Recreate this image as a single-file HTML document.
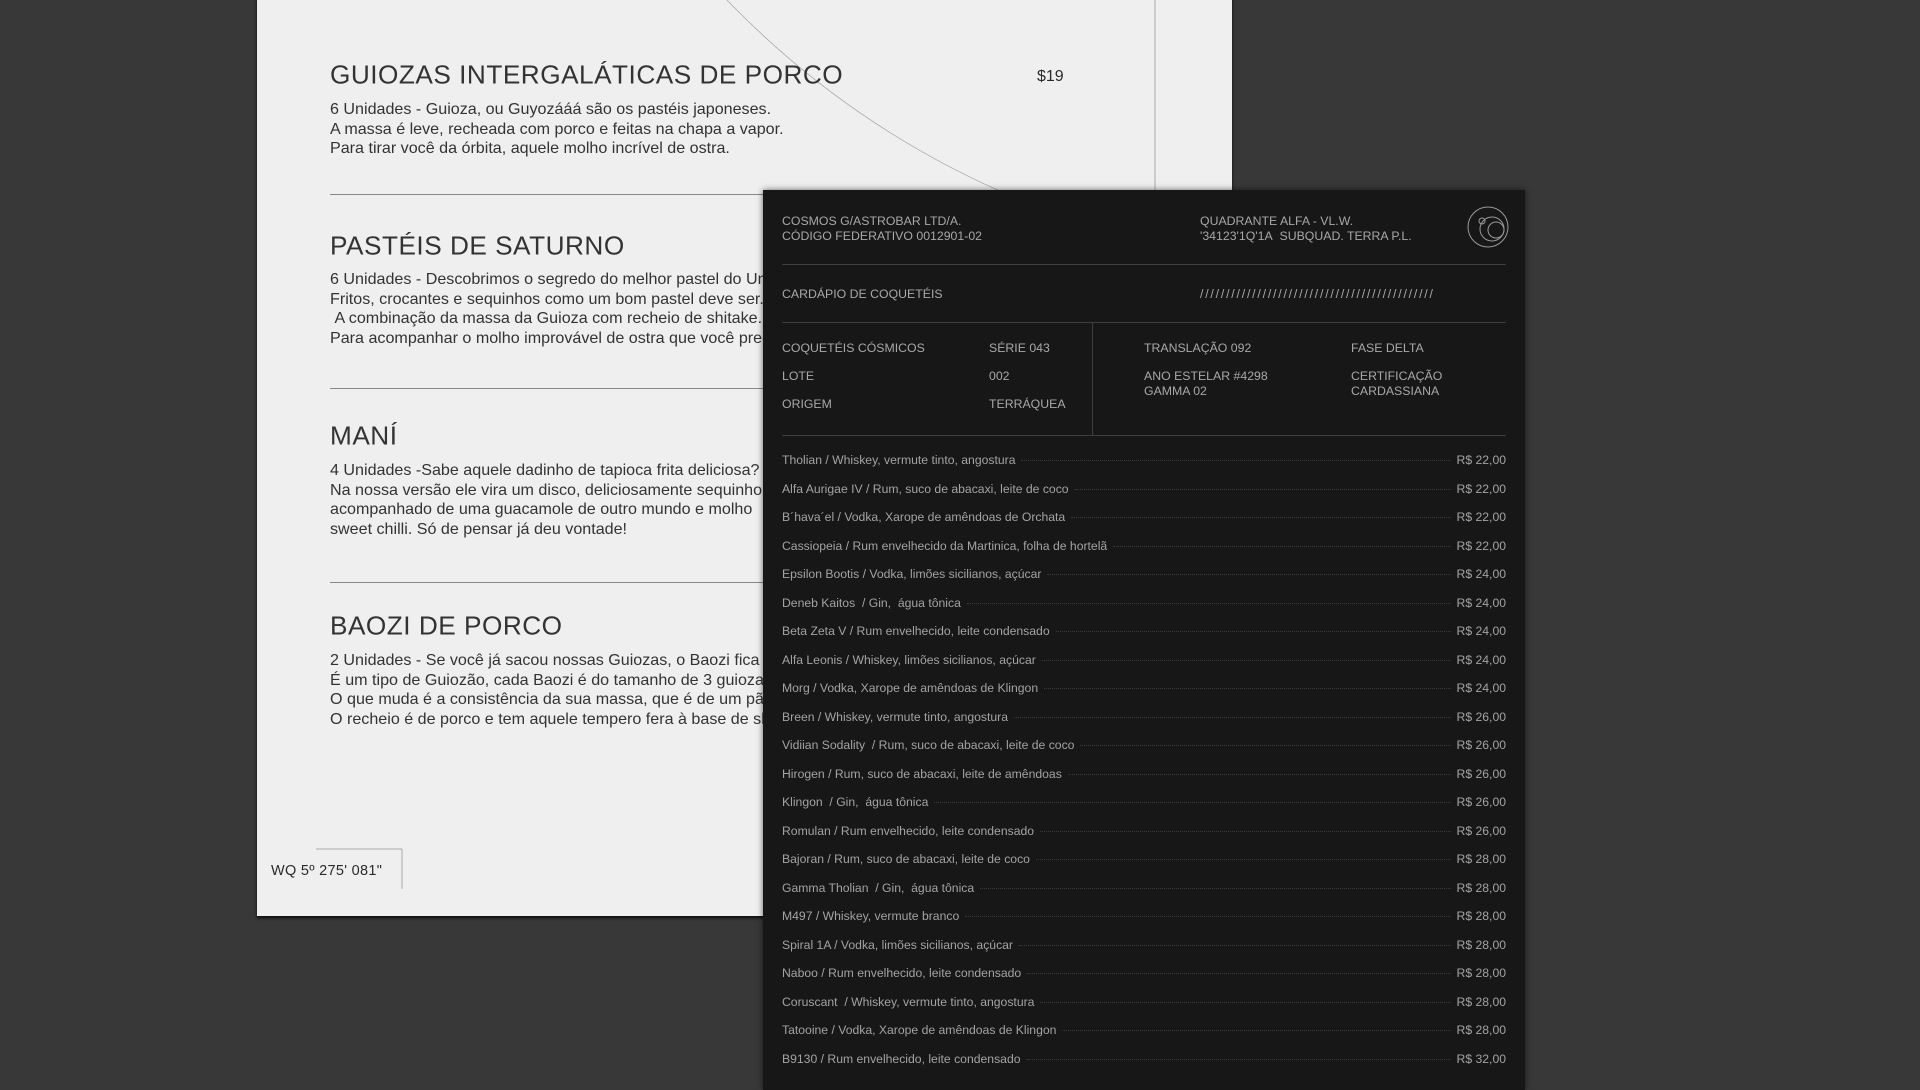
<!DOCTYPE html>
<html><head><meta charset="utf-8"><style>
*{margin:0;padding:0;box-sizing:border-box}
body{width:1920px;height:1080px;overflow:hidden;background:#383838;position:relative;font-family:"Liberation Sans Narrow","Liberation Sans",sans-serif}
.paper{position:absolute;left:257px;top:-10px;width:975px;height:926px;background:#efefef;box-shadow:0 2px 3px rgba(0,0,0,.8);overflow:hidden}
.a{position:absolute;white-space:nowrap;color:#2a2a2a}
.h{font-size:26.2px;letter-spacing:0.5px;color:#333;transform:translateY(-50%)}
.b{font-size:16.1px;line-height:19.7px;color:#333}
.hr{position:absolute;height:1px;background:#888}
.card{position:absolute;left:763px;top:190px;width:762px;height:900px;background:#171717;box-shadow:0 0 6px rgba(0,0,0,.6)}
.d{position:absolute;white-space:nowrap;color:#a8a8a8;font-size:12.3px;line-height:15px}
.dl{position:absolute;height:1px;background:#3e3e3e}
.row{position:absolute;left:19px;width:724px;display:flex;align-items:baseline;font-size:12.2px;color:#a3a3a3}
.row .dots{flex:1;border-bottom:1px dotted #3a3a3a;margin:0 6px;transform:translateY(-3px)}
</style></head><body>
<div class="paper">
<svg style="position:absolute;left:0;top:0" width="975" height="926"><circle cx="1093" cy="-590" r="865" fill="none" stroke="#aaa" stroke-width="0.8"/><line x1="898" y1="0" x2="898" y2="210" stroke="#aaa" stroke-width="1"/><line x1="59" y1="859" x2="145" y2="859" stroke="#aaa"/><line x1="145" y1="859" x2="145" y2="899" stroke="#aaa"/></svg>
<div class="a h" style="left:73px;top:85px">GUIOZAS INTERGALÁTICAS DE PORCO</div>
<div class="a" style="left:780px;top:78px;font-size:16px">$19</div>
<div class="a b" style="left:73px;top:110px">6 Unidades - Guioza, ou Guyozááá são os pastéis japoneses.<br>A massa é leve, recheada com porco e feitas na chapa a vapor.<br>Para tirar você da órbita, aquele molho incrível de ostra.</div>
<div class="hr" style="left:73px;top:204px;width:700px"></div>
<div class="a h" style="left:73px;top:256px">PASTÉIS DE SATURNO</div>
<div class="a b" style="left:73px;top:280px">6 Unidades - Descobrimos o segredo do melhor pastel do Universo.<br>Fritos, crocantes e sequinhos como um bom pastel deve ser.<br>&nbsp;A combinação da massa da Guioza com recheio de shitake.<br>Para acompanhar o molho improvável de ostra que você precisa provar.</div>
<div class="hr" style="left:73px;top:398px;width:700px"></div>
<div class="a h" style="left:73px;top:446px">MANÍ</div>
<div class="a b" style="left:73px;top:471px">4 Unidades -Sabe aquele dadinho de tapioca frita deliciosa?<br>Na nossa versão ele vira um disco, deliciosamente sequinho,<br>acompanhado de uma guacamole de outro mundo e molho<br>sweet chilli. Só de pensar já deu vontade!</div>
<div class="hr" style="left:73px;top:592px;width:700px"></div>
<div class="a h" style="left:73px;top:636px">BAOZI DE PORCO</div>
<div class="a b" style="left:73px;top:661px">2 Unidades - Se você já sacou nossas Guiozas, o Baozi fica fácil.<br>É um tipo de Guiozão, cada Baozi é do tamanho de 3 guiozas.<br>O que muda é a consistência da sua massa, que é de um pão.<br>O recheio é de porco e tem aquele tempero fera à base de shoyu.</div>
<div class="a" style="left:14px;top:873px;font-size:14.5px;letter-spacing:.3px">WQ 5º 275' 081"</div>
</div>
<div class="card">
<div class="d" style="left:19px;top:24px">COSMOS G/ASTROBAR LTD/A.<br>CÓDIGO FEDERATIVO 0012901-02</div>
<div class="d" style="left:437px;top:24px">QUADRANTE ALFA - VL.W.<br>'34123'1Q'1A&nbsp; SUBQUAD. TERRA P.L.</div>
<svg style="position:absolute;left:703px;top:15px" width="44" height="44" fill="none" stroke="#999" stroke-width="1"><circle cx="22" cy="22" r="20"/><circle cx="26" cy="24" r="12"/><circle cx="30" cy="25" r="8"/><circle cx="16" cy="16" r="3"/></svg>
<div class="dl" style="left:19px;top:74px;width:724px"></div>
<div class="d" style="left:19px;top:97px">CARDÁPIO DE COQUETÉIS</div>
<div class="d" style="left:437px;top:97px;letter-spacing:1.8px">/////////////////////////////////////////////</div>
<div class="dl" style="left:19px;top:132px;width:724px"></div>
<div style="position:absolute;left:329px;top:132px;width:1px;height:113px;background:#3e3e3e"></div>
<div class="d" style="left:19px;top:151px">COQUETÉIS CÓSMICOS</div>
<div class="d" style="left:226px;top:151px">SÉRIE 043</div>
<div class="d" style="left:381px;top:151px">TRANSLAÇÃO 092</div>
<div class="d" style="left:588px;top:151px">FASE DELTA</div>
<div class="d" style="left:19px;top:179px">LOTE</div>
<div class="d" style="left:226px;top:179px">002</div>
<div class="d" style="left:381px;top:179px">ANO ESTELAR #4298<br>GAMMA 02</div>
<div class="d" style="left:588px;top:179px">CERTIFICAÇÃO<br>CARDASSIANA</div>
<div class="d" style="left:19px;top:207px">ORIGEM</div>
<div class="d" style="left:226px;top:207px">TERRÁQUEA</div>
<div class="dl" style="left:19px;top:245px;width:724px"></div>
<div class="row" style="top:263px"><span>Tholian / Whiskey, vermute tinto, angostura</span><span class="dots"></span><span>R$ 22,00</span></div>
<div class="row" style="top:291.5px"><span>Alfa Aurigae IV / Rum, suco de abacaxi, leite de coco</span><span class="dots"></span><span>R$ 22,00</span></div>
<div class="row" style="top:320px"><span>B´hava´el / Vodka, Xarope de amêndoas de Orchata</span><span class="dots"></span><span>R$ 22,00</span></div>
<div class="row" style="top:348.5px"><span>Cassiopeia / Rum envelhecido da Martinica, folha de hortelã</span><span class="dots"></span><span>R$ 22,00</span></div>
<div class="row" style="top:377px"><span>Epsilon Bootis / Vodka, limões sicilianos, açúcar</span><span class="dots"></span><span>R$ 24,00</span></div>
<div class="row" style="top:405.5px"><span>Deneb Kaitos&nbsp; / Gin,&nbsp; água tônica</span><span class="dots"></span><span>R$ 24,00</span></div>
<div class="row" style="top:434px"><span>Beta Zeta V / Rum envelhecido, leite condensado</span><span class="dots"></span><span>R$ 24,00</span></div>
<div class="row" style="top:462.5px"><span>Alfa Leonis / Whiskey, limões sicilianos, açúcar</span><span class="dots"></span><span>R$ 24,00</span></div>
<div class="row" style="top:491px"><span>Morg / Vodka, Xarope de amêndoas de Klingon</span><span class="dots"></span><span>R$ 24,00</span></div>
<div class="row" style="top:519.5px"><span>Breen / Whiskey, vermute tinto, angostura</span><span class="dots"></span><span>R$ 26,00</span></div>
<div class="row" style="top:548px"><span>Vidiian Sodality&nbsp; / Rum, suco de abacaxi, leite de coco</span><span class="dots"></span><span>R$ 26,00</span></div>
<div class="row" style="top:576.5px"><span>Hirogen / Rum, suco de abacaxi, leite de amêndoas</span><span class="dots"></span><span>R$ 26,00</span></div>
<div class="row" style="top:605px"><span>Klingon&nbsp; / Gin,&nbsp; água tônica</span><span class="dots"></span><span>R$ 26,00</span></div>
<div class="row" style="top:633.5px"><span>Romulan / Rum envelhecido, leite condensado</span><span class="dots"></span><span>R$ 26,00</span></div>
<div class="row" style="top:662px"><span>Bajoran / Rum, suco de abacaxi, leite de coco</span><span class="dots"></span><span>R$ 28,00</span></div>
<div class="row" style="top:690.5px"><span>Gamma Tholian&nbsp; / Gin,&nbsp; água tônica</span><span class="dots"></span><span>R$ 28,00</span></div>
<div class="row" style="top:719px"><span>M497 / Whiskey, vermute branco</span><span class="dots"></span><span>R$ 28,00</span></div>
<div class="row" style="top:747.5px"><span>Spiral 1A / Vodka, limões sicilianos, açúcar</span><span class="dots"></span><span>R$ 28,00</span></div>
<div class="row" style="top:776px"><span>Naboo / Rum envelhecido, leite condensado</span><span class="dots"></span><span>R$ 28,00</span></div>
<div class="row" style="top:804.5px"><span>Coruscant&nbsp; / Whiskey, vermute tinto, angostura</span><span class="dots"></span><span>R$ 28,00</span></div>
<div class="row" style="top:833px"><span>Tatooine / Vodka, Xarope de amêndoas de Klingon</span><span class="dots"></span><span>R$ 28,00</span></div>
<div class="row" style="top:861.5px"><span>B9130 / Rum envelhecido, leite condensado</span><span class="dots"></span><span>R$ 32,00</span></div>
</div>
</body></html>
